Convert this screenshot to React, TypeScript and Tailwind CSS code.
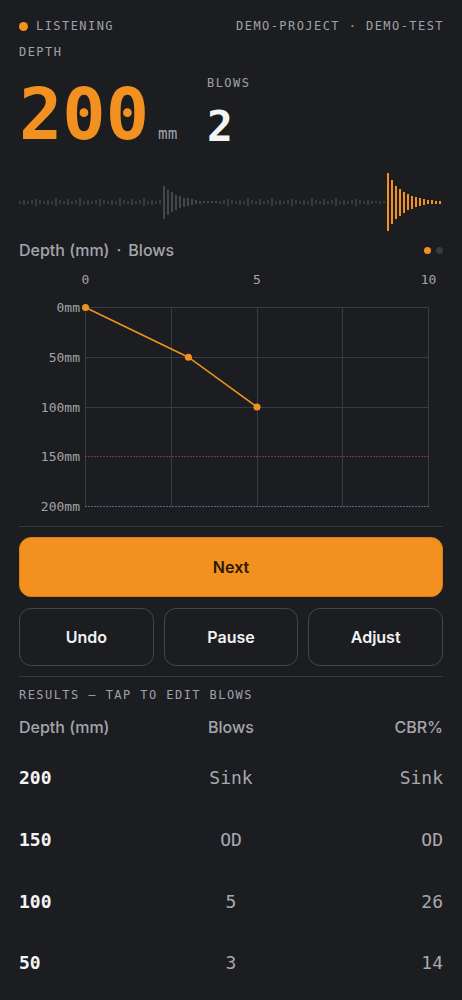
import React from "react";

const MONO = { fontFamily: '"DejaVu Sans Mono", "Liberation Mono", monospace' };
const SANS = { fontFamily: 'Inter, "Noto Sans", sans-serif' };

function Waveform() {
  const noise = [3, 5, 3, 4, 7, 4, 3, 5, 3, 8, 4, 3, 6, 3, 4, 8];
  const spike = [33, 25, 20, 15, 12, 9, 8, 6, 4, 3, 2, 2, 2, 2];
  const orange = [58, 44, 33, 27, 21, 16, 13, 10, 8, 6, 4, 4, 3, 3];
  const bars: { x: number; h: number; c: string }[] = [];
  for (let i = 0; i < 106; i++) {
    const x = 19 + i * 4;
    let h = noise[i % noise.length];
    let c = "#393a40";
    if (i >= 36 && i < 50) {
      h = spike[i - 36];
      c = "#45464c";
    } else if (i >= 89 && i < 92) {
      h = [2, 3, 2][i - 89];
    } else if (i >= 92) {
      h = orange[i - 92];
      c = "#f29120";
    }
    bars.push({ x, h, c });
  }
  return (
    <svg width="462" height="60" viewBox="0 0 462 60" className="block">
      {bars.map((b, i) => (
        <rect key={i} x={b.x} y={Math.round(30 - b.h / 2)} width={2} height={b.h} fill={b.c} />
      ))}
    </svg>
  );
}

function Chart() {
  const top = 41.5;
  const bottom = 240.5;
  const x0 = 85.5;
  const x1 = 428.5;
  const xs = [0, 1, 2, 3, 4].map((i) => Math.round(x0 + ((x1 - x0) * i) / 4 - 0.5) + 0.5);
  const ys = [0, 1, 2, 3, 4].map((i) => Math.round(top + ((bottom - top) * i) / 4 - 0.5) + 0.5);
  const px = (b: number) => x0 + ((x1 - x0) * b) / 10;
  const py = (d: number) => top + ((bottom - top) * d) / 200;
  const pts = [
    [0, 0],
    [3, 50],
    [5, 100],
  ];
  const labels = ["0mm", "50mm", "100mm", "150mm", "200mm"];
  return (
    <svg width="462" height="248" viewBox="0 0 462 248" className="block" style={MONO}>
      {[
        ["0", 0],
        ["5", 5],
        ["10", 10],
      ].map(([t, b]) => (
        <text key={t as string} x={px(b as number)} y={18} textAnchor="middle" fontSize="13" fill="#a3a3a9">
          {t}
        </text>
      ))}
      {xs.map((x, i) => (
        <line key={"v" + i} x1={x} x2={x} y1={top} y2={bottom} stroke="#3a3b41" strokeWidth="1" />
      ))}
      {ys.slice(0, 3).map((y, i) => (
        <line key={"h" + i} x1={x0} x2={x1} y1={y} y2={y} stroke="#3a3b41" strokeWidth="1" />
      ))}
      <line x1={x0} x2={x1} y1={ys[3]} y2={ys[3]} stroke="#e2553c" strokeWidth="1" strokeDasharray="1 2" />
      <line x1={x0} x2={x1} y1={ys[4]} y2={ys[4]} stroke="#74c3f0" strokeWidth="1" strokeDasharray="1 2" />
      {labels.map((l, i) => (
        <text key={l} x={80} y={ys[i] + 4.5} textAnchor="end" fontSize="13" fill="#a3a3a9">
          {l}
        </text>
      ))}
      <polyline
        points={pts.map(([b, d]) => `${px(b)},${py(d)}`).join(" ")}
        fill="none"
        stroke="#f29120"
        strokeWidth="1.5"
      />
      {pts.map(([b, d]) => (
        <circle key={b} cx={px(b)} cy={py(d)} r="3.5" fill="#f29120" />
      ))}
    </svg>
  );
}

export default function App() {
  const rows = [
    ["200", "Sink", "Sink"],
    ["150", "OD", "OD"],
    ["100", "5", "26"],
    ["50", "3", "14"],
  ];
  return (
    <div className="w-[462px] h-[1000px] overflow-hidden bg-[#1c1d21]" style={SANS}>
      <div className="px-[19px] pt-[18px]">
        <div className="flex items-center justify-between h-4 text-[12px] tracking-[0.12em] text-[#a0a1a7]" style={MONO}>
          <div className="flex items-center gap-[8px]">
            <span className="w-[9px] h-[9px] rounded-full bg-[#f29120]" />
            <span>LISTENING</span>
          </div>
          <span className="mr-[-1px]">DEMO-PROJECT · DEMO-TEST</span>
        </div>
        <div className="mt-[10px] h-4 text-[12px] leading-4 tracking-[0.12em] text-[#a0a1a7]" style={MONO}>
          DEPTH
        </div>
        <div className="flex items-end mt-[4px] h-[86px]">
          <div className="flex items-baseline w-[188px]">
            <span className="text-[72px] leading-none font-bold text-[#f29120]" style={MONO}>
              200
            </span>
            <span className="ml-[9px] text-[16px] text-[#a0a1a7]" style={MONO}>
              mm
            </span>
          </div>
          <div className="flex flex-col mb-[2px]">
            <span className="text-[12px] leading-4 tracking-[0.12em] text-[#a0a1a7]" style={MONO}>
              BLOWS
            </span>
            <span className="mt-[14px] text-[43px] leading-none font-bold text-[#f4f4f5]" style={MONO}>
              2
            </span>
          </div>
        </div>
      </div>
      <div className="mt-[22px]">
        <Waveform />
      </div>
      <div className="px-[19px] flex items-center justify-between h-6 mt-[6px]">
        <span className="text-[16px] font-medium text-[#a5a5ab]">
          Depth (mm)<span className="mx-[7px]">·</span>Blows
        </span>
        <div className="flex items-center gap-[5px]">
          <span className="w-[7px] h-[7px] rounded-full bg-[#f29120]" />
          <span className="w-[7px] h-[7px] rounded-full bg-[#3a3b41]" />
        </div>
      </div>
      <div className="mt-[4px]">
        <Chart />
      </div>
      <div className="px-[19px]">
        <div className="mt-[12px] h-px bg-[#38393f]" />
        <button className="mt-[10px] w-full h-[60px] rounded-[12px] bg-[#f29120] border border-[#d97f16] text-[16px] font-semibold text-[#2a1905]">
          Next
        </button>
        <div className="mt-[11px] grid grid-cols-3 gap-[10px]">
          {["Undo", "Pause", "Adjust"].map((t) => (
            <button
              key={t}
              className="h-[58px] rounded-[12px] border border-[#45464c] text-[16px] font-semibold text-[#f2f2f3]"
            >
              {t}
            </button>
          ))}
        </div>
        <div className="mt-[10px] h-px bg-[#38393f]" />
        <div className="mt-[10px] h-4 text-[12px] leading-4 tracking-[0.12em] text-[#a0a1a7]" style={MONO}>
          RESULTS — TAP TO EDIT BLOWS
        </div>
        <div className="mt-[4px] grid grid-cols-3 h-[40px] items-center text-[16px] font-medium text-[#a5a5ab]">
          <span>Depth (mm)</span>
          <span className="text-center">Blows</span>
          <span className="text-right">CBR%</span>
        </div>
        {rows.map((r) => (
          <div key={r[0]} className="grid grid-cols-3 h-[61.7px] items-center text-[18px]" style={MONO}>
            <span className="font-semibold text-[#f4f4f5]">{r[0]}</span>
            <span className="text-center text-[#a8a8ae]">{r[1]}</span>
            <span className="text-right text-[#a8a8ae]">{r[2]}</span>
          </div>
        ))}
      </div>
    </div>
  );
}
